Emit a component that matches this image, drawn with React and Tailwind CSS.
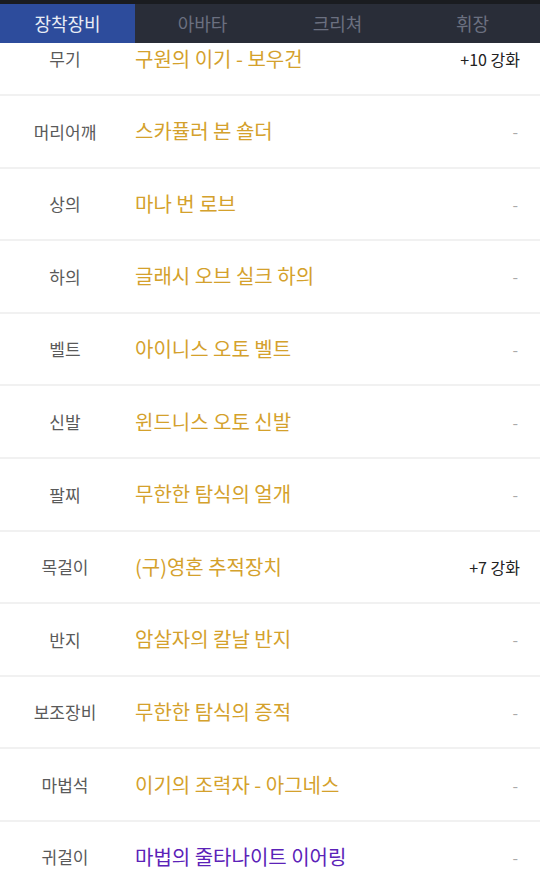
const TABS = ["장착장비", "아바타", "크리쳐", "휘장"];

const ITEMS = [
  { slot: "무기", name: "구원의 이기 - 보우건", grade: "unique", enhance: "+10 강화" },
  { slot: "머리어깨", name: "스카퓰러 본 숄더", grade: "unique" },
  { slot: "상의", name: "마나 번 로브", grade: "unique" },
  { slot: "하의", name: "글래시 오브 실크 하의", grade: "unique" },
  { slot: "벨트", name: "아이니스 오토 벨트", grade: "unique" },
  { slot: "신발", name: "윈드니스 오토 신발", grade: "unique" },
  { slot: "팔찌", name: "무한한 탐식의 얼개", grade: "unique" },
  { slot: "목걸이", name: "(구)영혼 추적장치", grade: "unique", enhance: "+7 강화" },
  { slot: "반지", name: "암살자의 칼날 반지", grade: "unique" },
  { slot: "보조장비", name: "무한한 탐식의 증적", grade: "unique" },
  { slot: "마법석", name: "이기의 조력자 - 아그네스", grade: "unique" },
  { slot: "귀걸이", name: "마법의 줄타나이트 이어링", grade: "rare" },
];

const GRADE_COLOR = {
  unique: "text-[#d4a12c]",
  rare: "text-[#5b22b8]",
};

function ItemRow({ item }) {
  return (
    <div className="h-[72.6px] flex items-center border-b-2 border-[#f1f1f1] pr-5">
      <div className="w-[130px] shrink-0 text-center text-[17px] text-[#5a5a5a]">{item.slot}</div>
      <div className={`flex-1 min-w-0 pl-[5px] text-[20px] ${GRADE_COLOR[item.grade]}`}>{item.name}</div>
      {item.enhance ? (
        <div className="text-[16px] text-[#222]">{item.enhance}</div>
      ) : (
        <div className="text-[16px] text-[#aaa] pr-[2px]">-</div>
      )}
    </div>
  );
}

export default function App() {
  return (
    <div className="relative w-[540px] h-[870px] overflow-hidden bg-white font-['Noto_Sans_CJK_KR','Noto_Sans',sans-serif]">
      {/* list, scrolled a bit under the sticky tabs */}
      <div className="pt-[23.4px]">
        {ITEMS.map((it) => (
          <ItemRow key={it.slot} item={it} />
        ))}
      </div>

      {/* sticky tab header */}
      <div className="absolute top-0 left-0 right-0">
        <div className="h-[4px] bg-[#1a1c20]" />
        <div className="h-[39px] grid grid-cols-4 bg-[#292d38]">
          {TABS.map((t, i) => (
            <div
              key={t}
              className={
                i === 0
                  ? "flex items-center justify-center bg-[#2d4c9c] text-[18px] text-[#e8ecf5]"
                  : "flex items-center justify-center text-[18px] text-[#6b7080]"
              }
            >
              {t}
            </div>
          ))}
        </div>
      </div>
    </div>
  );
}
